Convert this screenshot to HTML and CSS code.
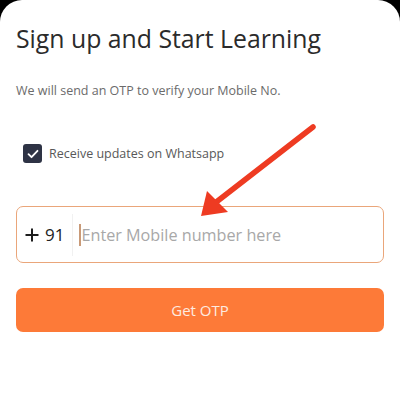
FILE: index.html
```html
<!DOCTYPE html>
<html>
<head>
<meta charset="utf-8">
<link rel="stylesheet" href="styles.css">
</head>
<body>
<div class="card">
  <h1 class="title">Sign up and Start Learning</h1>
  <p class="subtitle">We will send an OTP to verify your Mobile No.</p>
  <label class="check-row">
    <span class="checkbox">
      <svg width="12" height="10" viewBox="0 0 12 10"><path d="M1.5 5.2 L4.5 8.2 L10.5 1.8" fill="none" stroke="#fff" stroke-width="1.8" stroke-linecap="round" stroke-linejoin="round"/></svg>
    </span>
    <span class="check-label">Receive updates on Whatsapp</span>
  </label>
  <div class="phone">
    <span class="code"><svg class="plus" width="14" height="14" viewBox="0 0 14 14"><path d="M7 0.5 V13.5 M0.5 7 H13.5" stroke="#1e1e1e" stroke-width="2"/></svg>91</span>
    <span class="divider"></span>
    <span class="cursor"></span>
    <span class="placeholder">Enter Mobile number here</span>
  </div>
  <button class="otp">Get OTP</button>
  <svg class="arrow" width="400" height="400" viewBox="0 0 400 400">
    <line x1="313" y1="127" x2="215" y2="203" stroke="#ee3b22" stroke-width="5.5" stroke-linecap="round"/>
    <polygon points="201,216 207,191 228,212" fill="#ee3b22"/>
  </svg>
</div>
</body>
</html>
```
FILE: styles.css
```css
html, body {
  margin: 0;
  padding: 0;
  background: #000;
  width: 400px;
  height: 400px;
  overflow: hidden;
}
.card {
  position: relative;
  background: #fff;
  border-radius: 22px 22px 0 0;
  height: 400px;
  box-sizing: border-box;
  padding: 22px 16px 0 16px;
  font-family: "Open Sans", "Noto Sans", sans-serif;
}
.title {
  margin: 0;
  font-weight: 400;
  font-size: 24.8px;
  line-height: 32px;
  color: #2b2b2b;
}
.subtitle {
  margin: 28px 0 0 0;
  font-size: 12.5px;
  line-height: 18px;
  color: #6b6b6b;
}
.check-row {
  display: flex;
  align-items: center;
  gap: 7px;
  margin: 44px 0 0 7px;
}
.checkbox {
  width: 19px;
  height: 19px;
  border-radius: 3px;
  background: #2e3345;
  display: flex;
  align-items: center;
  justify-content: center;
}
.check-label {
  font-size: 12.5px;
  color: #585858;
}
.phone {
  margin-top: 43px;
  height: 57px;
  box-sizing: border-box;
  border: 1.5px solid #eaa67a;
  border-radius: 7px;
  display: flex;
  align-items: center;
  padding-left: 8px;
}
.code {
  font-size: 17px;
  color: #222;
  display: flex;
  align-items: center;
}
.plus {
  margin-right: 6px;
  margin-top: 1px;
}
.divider {
  width: 1px;
  height: 42px;
  background: #f1f1f1;
  margin-left: 8px;
}
.cursor {
  width: 2px;
  height: 22px;
  background: #c99a78;
  margin-left: 6px;
}
.placeholder {
  font-size: 16.2px;
  color: #a8a8a8;
  margin-left: 0;
}
.otp {
  display: block;
  width: 100%;
  margin-top: 25px;
  height: 44px;
  border: none;
  border-radius: 7px;
  background: #fd7a38;
  color: #fdebe0;
  font-family: "Open Sans", "Noto Sans", sans-serif;
  font-size: 15px;
}
.arrow {
  position: absolute;
  left: 0;
  top: 0;
  pointer-events: none;
}
```
